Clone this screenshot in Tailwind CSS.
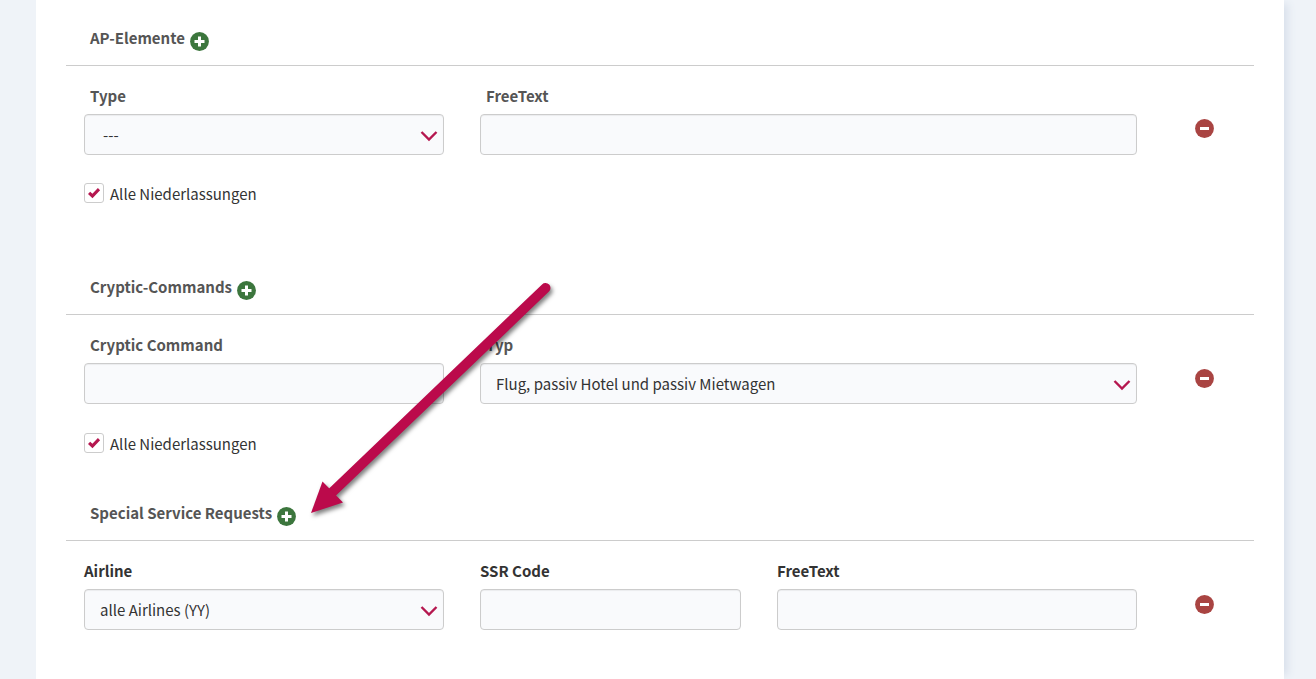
<!DOCTYPE html>
<html lang="de">
<head>
<meta charset="utf-8">
<meta name="viewport" content="width=device-width, initial-scale=1">
<title>Elemente</title>
<script src="https://cdn.jsdelivr.net/npm/@tailwindcss/browser@4"></script>
</head>
<body class="min-h-screen bg-[#eff3f8] pl-9 pr-8 font-['Noto_Sans_CJK_SC','Noto_Sans',sans-serif] text-[15px] leading-6 text-[#333]">
<svg class="hidden" aria-hidden="true">
  <symbol id="plus" viewBox="0 0 19 19"><circle cx="9.5" cy="9.5" r="9.4" fill="#3c763d"/><path d="M8 4.500h3V8h3.500v3H11v3.500H8V11H4.500V8H8z" fill="#fff"/></symbol>
  <symbol id="minus" viewBox="0 0 19 19"><circle cx="9.5" cy="9.5" r="9.4" fill="#a94442"/><path d="M5 8h9v3H5z" fill="#fff"/></symbol>
  <symbol id="chevron" viewBox="0 0 18 12"><path d="M1.5 2 9 9.5 16.500 2" fill="none" stroke="#b5174f" stroke-width="2.400"/></symbol>
  <symbol id="check" viewBox="0 0 14 12"><path d="M1 6.900 3.200 4.700 5.400 6.700 10.900 1 13.100 3.200 5.500 11.200z" fill="#b5174f"/></symbol>
</svg>
<main class="relative min-h-screen bg-white px-[30px] pb-12 shadow-[8px_0_8px_-4px_#d9e0eb]">

  <section>
    <div class="flex items-center gap-[5px] border-b border-[#ccc] pt-[26px] pb-[15px] pl-6">
      <h2 class="font-bold text-[#555]">AP-Elemente</h2>
      <button type="button" aria-label="AP-Element hinzufügen" class="mt-[3px] -mb-[3px]"><svg class="block size-[19px]"><use href="#plus"/></svg></button>
    </div>
    <div class="grid grid-cols-12 pt-[18px]">
      <div class="col-span-4 px-[18px]">
        <label for="type" class="mb-1.5 block pl-1.5 font-bold text-[#555]">Type</label>
        <div class="grid items-center">
          <select id="type" class="col-start-1 row-start-1 h-[41px] w-full appearance-none rounded border border-[#ccc] bg-[#f9fafc] pl-[18px] pr-9 shadow-[inset_0_1px_1px_#0000000f]"><option>---</option></select>
          <svg class="pointer-events-none col-start-1 row-start-1 mt-0.5 mr-1.5 h-3 w-[18px] justify-self-end"><use href="#chevron"/></svg>
        </div>
      </div>
      <div class="col-span-7 px-[18px]">
        <label for="free1" class="mb-1.5 block pl-1.5 font-bold text-[#555]">FreeText</label>
        <input id="free1" type="text" class="block h-[41px] w-full rounded border border-[#ccc] bg-[#f9fafc] px-4 shadow-[inset_0_1px_1px_#0000000f]">
      </div>
      <div class="col-span-1 flex items-start justify-center pt-[35px]">
        <button type="button" aria-label="AP-Element entfernen"><svg class="block size-[19px]"><use href="#minus"/></svg></button>
      </div>
    </div>
    <label class="mt-[27px] ml-[18px] flex w-fit items-center gap-1.5">
      <span class="-mt-0.5 grid place-items-center">
        <input type="checkbox" checked class="peer col-start-1 row-start-1 size-5 appearance-none rounded-[3px] border border-[#ccc] bg-white">
        <svg class="pointer-events-none invisible col-start-1 row-start-1 h-3 w-3.5 peer-checked:visible"><use href="#check"/></svg>
      </span>
      <span>Alle Niederlassungen</span>
    </label>
  </section>

  <section class="mt-[43px]">
    <div class="flex items-center gap-[5px] border-b border-[#ccc] pt-[26px] pb-[15px] pl-6">
      <h2 class="font-bold text-[#555]">Cryptic-Commands</h2>
      <button type="button" aria-label="Cryptic-Command hinzufügen" class="mt-[3px] -mb-[3px]"><svg class="block size-[19px]"><use href="#plus"/></svg></button>
    </div>
    <div class="grid grid-cols-12 pt-[18px]">
      <div class="col-span-4 px-[18px]">
        <label for="cmd" class="mb-1.5 block pl-1.5 font-bold text-[#555]">Cryptic Command</label>
        <input id="cmd" type="text" class="block h-[41px] w-full rounded border border-[#ccc] bg-[#f9fafc] px-4 shadow-[inset_0_1px_1px_#0000000f]">
      </div>
      <div class="col-span-7 px-[18px]">
        <label for="typ" class="mb-1.5 block pl-1.5 font-bold text-[#555]">Typ</label>
        <div class="grid items-center">
          <select id="typ" class="col-start-1 row-start-1 h-[41px] w-full appearance-none rounded border border-[#ccc] bg-[#f9fafc] pl-[15px] pr-9 shadow-[inset_0_1px_1px_#0000000f]"><option>Flug, passiv Hotel und passiv Mietwagen</option></select>
          <svg class="pointer-events-none col-start-1 row-start-1 mt-0.5 mr-1.5 h-3 w-[18px] justify-self-end"><use href="#chevron"/></svg>
        </div>
      </div>
      <div class="col-span-1 flex items-start justify-center pt-9">
        <button type="button" aria-label="Cryptic-Command entfernen"><svg class="block size-[19px]"><use href="#minus"/></svg></button>
      </div>
    </div>
    <label class="mt-7 ml-[18px] flex w-fit items-center gap-1.5">
      <span class="-mt-0.5 grid place-items-center">
        <input type="checkbox" checked class="peer col-start-1 row-start-1 size-5 appearance-none rounded-[3px] border border-[#ccc] bg-white">
        <svg class="pointer-events-none invisible col-start-1 row-start-1 h-3 w-3.5 peer-checked:visible"><use href="#check"/></svg>
      </span>
      <span>Alle Niederlassungen</span>
    </label>
  </section>

  <section class="mt-[19px]">
    <div class="flex items-center gap-[5px] border-b border-[#ccc] pt-[26px] pb-[15px] pl-6">
      <h2 class="font-bold text-[#555]">Special Service Requests</h2>
      <button type="button" aria-label="Special Service Request hinzufügen" class="mt-[3px] -mb-[3px]"><svg class="block size-[19px]"><use href="#plus"/></svg></button>
    </div>
    <div class="grid grid-cols-12 pt-[18px]">
      <div class="col-span-4 px-[18px]">
        <label for="airline" class="mb-1.5 block font-bold">Airline</label>
        <div class="grid items-center">
          <select id="airline" class="col-start-1 row-start-1 h-[41px] w-full appearance-none rounded border border-[#ccc] bg-[#f9fafc] pl-[15px] pr-9 shadow-[inset_0_1px_1px_#0000000f]"><option>alle Airlines (YY)</option></select>
          <svg class="pointer-events-none col-start-1 row-start-1 mt-0.5 mr-1.5 h-3 w-[18px] justify-self-end"><use href="#chevron"/></svg>
        </div>
      </div>
      <div class="col-span-3 px-[18px]">
        <label for="ssr" class="mb-1.5 block font-bold">SSR Code</label>
        <input id="ssr" type="text" class="block h-[41px] w-full rounded border border-[#ccc] bg-[#f9fafc] px-4 shadow-[inset_0_1px_1px_#0000000f]">
      </div>
      <div class="col-span-4 px-[18px]">
        <label for="free2" class="mb-1.5 block font-bold">FreeText</label>
        <input id="free2" type="text" class="block h-[41px] w-full rounded border border-[#ccc] bg-[#f9fafc] px-4 shadow-[inset_0_1px_1px_#0000000f]">
      </div>
      <div class="col-span-1 flex items-start justify-center pt-9">
        <button type="button" aria-label="Special Service Request entfernen"><svg class="block size-[19px]"><use href="#minus"/></svg></button>
      </div>
    </div>
  </section>

  <!-- Pointer to the add button of the last section -->
  <svg class="pointer-events-none absolute top-[270px] left-[264px] h-[260px] w-[270px] drop-shadow-[2px_3px_2px_#00000080]" viewBox="0 0 270 260" aria-hidden="true">
    <path d="M245.500 18 32 222.500" stroke="#bb0a4b" stroke-width="10" stroke-linecap="round"/>
    <path d="M11 243 22.500 211.500 43 232.500z" fill="#bb0a4b"/>
  </svg>
</main>
</body>
</html>
